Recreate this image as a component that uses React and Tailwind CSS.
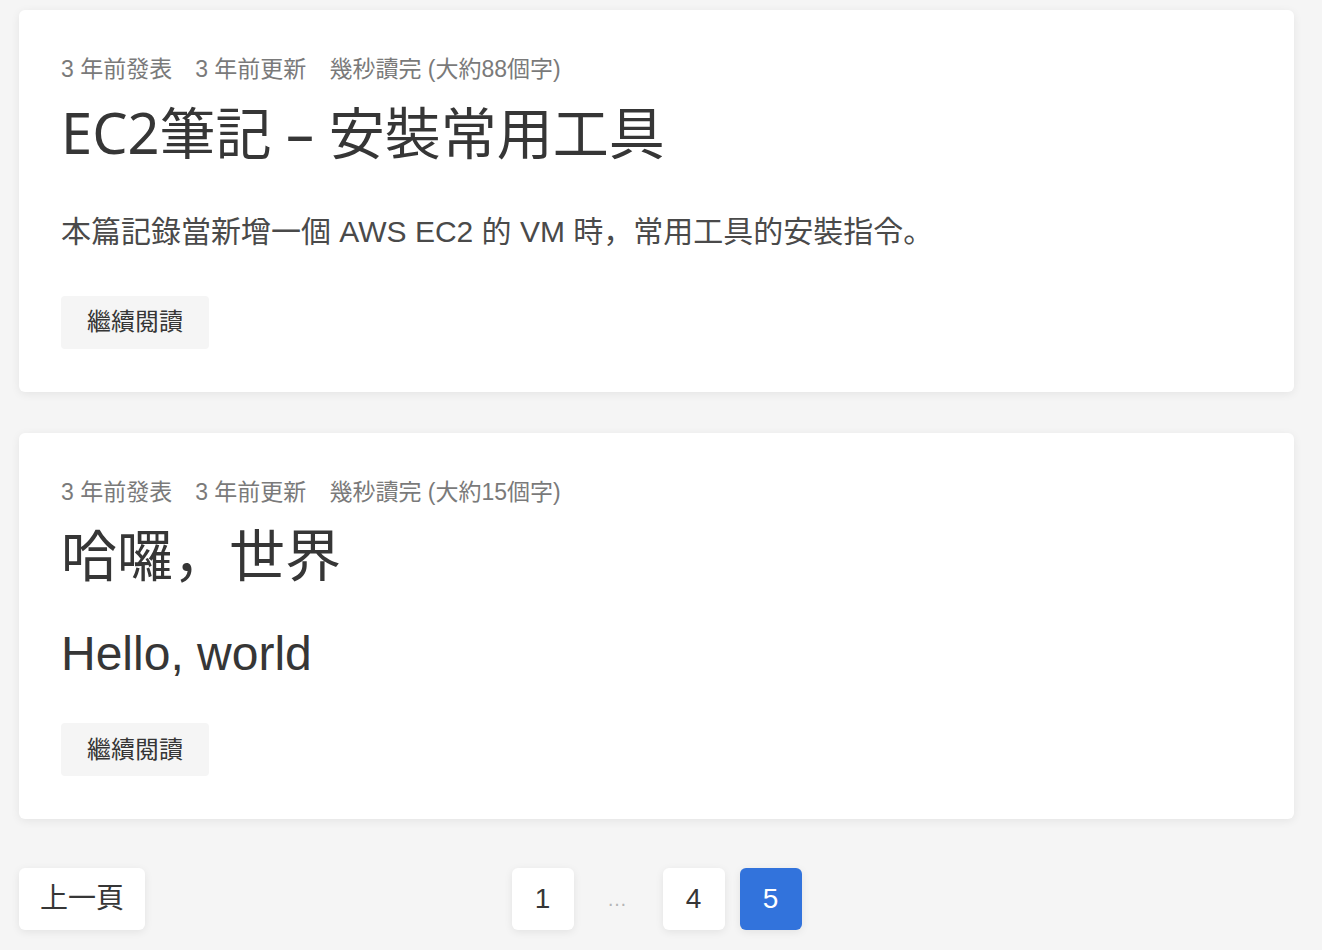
const FONT = 'font-["Liberation_Sans","Noto_Sans_CJK_JP",sans-serif]'

const posts = [
  {
    words: 88,
    title: 'EC2筆記 – 安裝常用工具',
    body: (
      <p className="mt-[45px] text-[30px] leading-[1.5] text-[#4a4a4a]">
        本篇記錄當新增一個 AWS EC2 的 VM 時，常用工具的安裝指令。
      </p>
    ),
  },
  {
    words: 15,
    title: '哈囉，世界',
    body: (
      <h1 className="mt-[41px] text-[48px] leading-[1.125] text-[#363636]">Hello, world</h1>
    ),
  },
]

function PostCard({ post }) {
  return (
    <div className="rounded-[6px] bg-white px-[42px] pb-[43px] pt-[42px] shadow-[0_2px_10px_rgba(10,10,10,0.07)]">
      <div className="flex gap-[23px] text-[23px] leading-[1.5] text-[#7a7a7a]">
        <span>3 年前發表</span>
        <span>3 年前更新</span>
        <span>幾秒讀完 (大約{post.words}個字)</span>
      </div>
      <h2 className='mt-[14px] font-["Noto_Sans","Noto_Sans_CJK_JP",sans-serif] text-[56px] leading-[1.125] text-[#363636]'>
        {post.title}
      </h2>
      {post.body}
      <button className="mt-[42px] flex h-[53px] items-center rounded-[4px] bg-[#f5f5f5] px-[26px] text-[24px] text-[#363636]">
        繼續閱讀
      </button>
    </div>
  )
}

function PageLink({ children, current = false }) {
  return (
    <a
      className={
        current
          ? 'flex h-[62px] w-[62px] items-center justify-center rounded-[6px] bg-[#3273dc] text-[28px] text-white shadow-[0_2px_8px_rgba(10,10,10,0.08)]'
          : 'flex h-[62px] w-[62px] items-center justify-center rounded-[6px] bg-white text-[28px] text-[#363636] shadow-[0_2px_8px_rgba(10,10,10,0.08)]'
      }
    >
      {children}
    </a>
  )
}

export default function App() {
  return (
    <div className={`${FONT} min-h-[950px] bg-[#f5f5f5] pl-[19px] pt-[10px]`}>
      <div className="flex w-[1275px] flex-col gap-[41px]">
        {posts.map(post => (
          <PostCard key={post.words} post={post} />
        ))}
      </div>

      <nav className="mt-[49px] grid w-[1275px] grid-cols-[1fr_auto_1fr] items-center">
        <div>
          <a className="flex h-[62px] w-[126px] items-center justify-center rounded-[6px] bg-white text-[28px] text-[#363636] shadow-[0_2px_8px_rgba(10,10,10,0.08)]">
            上一頁
          </a>
        </div>
        <div className="flex items-center gap-[15px]">
          <PageLink>1</PageLink>
          <span className="flex w-[59px] justify-center text-[20px] tracking-[2px] text-[#b5b5b5]">…</span>
          <PageLink>4</PageLink>
          <PageLink current>5</PageLink>
        </div>
        <div />
      </nav>
    </div>
  )
}
